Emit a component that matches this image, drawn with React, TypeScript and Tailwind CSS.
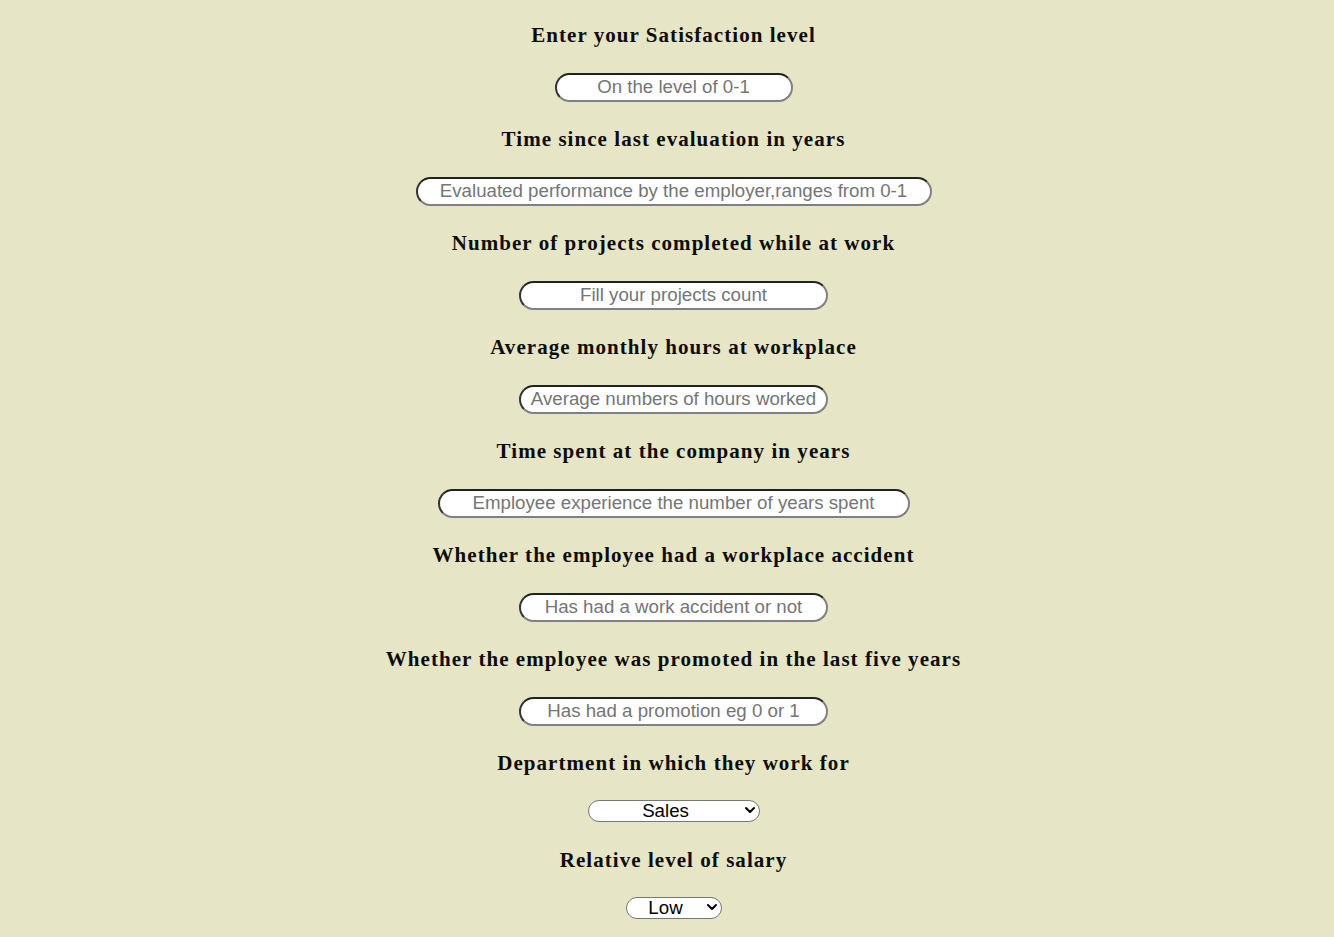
import React from 'react';

const fields = [
  { label: 'Enter your Satisfaction level', placeholder: 'On the level of 0-1', width: 'w-[238px]' },
  { label: 'Time since last evaluation in years', placeholder: 'Evaluated performance by the employer,ranges from 0-1', width: 'w-[516px]' },
  { label: 'Number of projects completed while at work', placeholder: 'Fill your projects count', width: 'w-[309px]' },
  { label: 'Average monthly hours at workplace', placeholder: 'Average numbers of hours worked', width: 'w-[309px]' },
  { label: 'Time spent at the company in years', placeholder: 'Employee experience the number of years spent', width: 'w-[472px]' },
  { label: 'Whether the employee had a workplace accident', placeholder: 'Has had a work accident or not', width: 'w-[309px]' },
  { label: 'Whether the employee was promoted in the last five years', placeholder: 'Has had a promotion eg 0 or 1', width: 'w-[309px]' },
];

function Label({ children, first, tight }: { children: React.ReactNode; first?: boolean; tight?: boolean }) {
  return (
    <h3
      className={`${first ? '' : tight ? 'mt-[26px]' : 'mt-[24px]'} h-[26px] leading-[26px] text-[21px] font-bold tracking-[0.05em] text-[#0d0d0d] font-['Liberation_Serif',serif]`}
    >
      {children}
    </h3>
  );
}

function Select({ options, width }: { options: string[]; width: string }) {
  return (
    <div className={`relative mt-[23px] h-[22px] ${width}`}>
      <select
        defaultValue={options[0]}
        className="h-full w-full appearance-none rounded-[11px] border border-[#767676] bg-white pl-[2px] pr-[18px] text-center text-[18.7px] leading-[20px] text-black font-['Liberation_Sans',Arial,sans-serif] outline-none"
      >
        {options.map(o => (
          <option key={o}>{o}</option>
        ))}
      </select>
      <svg
        className="pointer-events-none absolute right-[4px] top-[5px]"
        width="12"
        height="12"
        viewBox="0 0 12 12"
        fill="none"
        stroke="#000"
        strokeWidth="2"
        strokeLinecap="round"
        strokeLinejoin="round"
      >
        <path d="M2 4l4 4 4-4" />
      </svg>
    </div>
  );
}

export default function App() {
  return (
    <div className="min-h-[937px] w-full bg-[#e6e5c5] pt-[22px] pb-[20px] pl-[13px]">
      <form className="flex flex-col items-center">
        {fields.map((f, i) => (
          <React.Fragment key={f.label}>
            <Label first={i === 0}>{f.label}</Label>
            <input
              type="text"
              placeholder={f.placeholder}
              className={`mt-[25px] h-[29px] ${f.width} rounded-[15px] border-2 [border-style:solid] border-t-[#222] border-l-[#333] border-b-[#808080] border-r-[#808080] bg-white px-[6px] pb-[1px] text-center text-[18.7px] text-black placeholder:text-[#757575] font-['Liberation_Sans',Arial,sans-serif] outline-none`}
            />
          </React.Fragment>
        ))}
        <Label>Department in which they work for</Label>
        <Select options={['Sales', 'Technical', 'Support', 'IT', 'Product manager', 'Marketing', 'RandD', 'Accounting', 'HR', 'Management']} width="w-[172px]" />
        <Label tight>Relative level of salary</Label>
        <Select options={['Low', 'Medium', 'High']} width="w-[96px]" />
      </form>
    </div>
  );
}
